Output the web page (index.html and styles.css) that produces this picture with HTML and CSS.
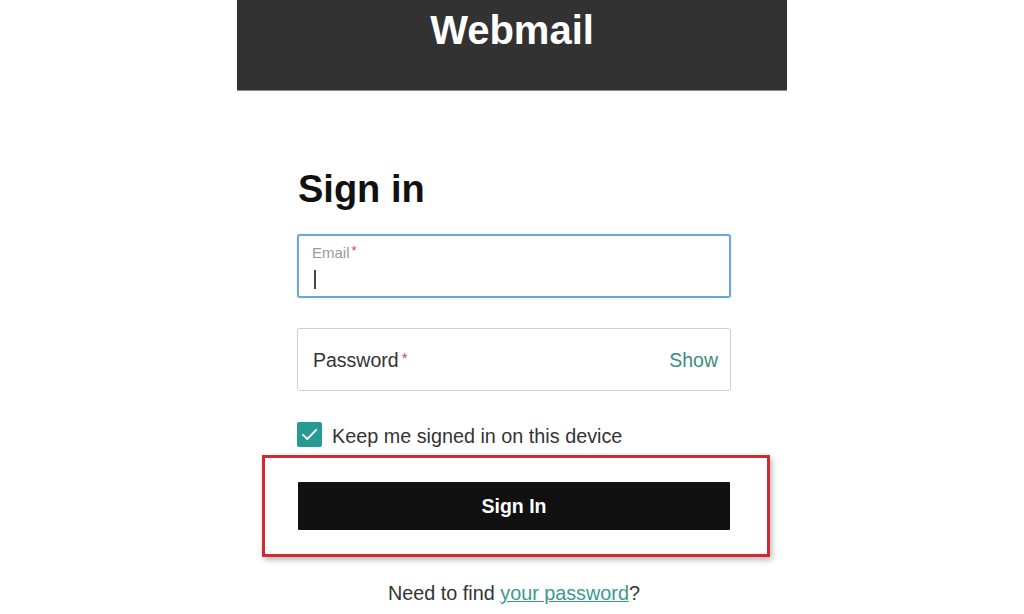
FILE: index.html
```html
<!DOCTYPE html>
<html lang="en">
<head>
<meta charset="utf-8">
<title>Webmail - Sign in</title>
<link rel="stylesheet" href="styles.css">
</head>
<body>
<div class="page">
  <header class="topbar">
    <h1 class="brand">Webmail</h1>
  </header>
  <main class="form">
    <h2 class="title">Sign in</h2>
    <div class="field field-email">
      <div class="field-label">Email<span class="req">*</span></div>
      <div class="caret"></div>
    </div>
    <div class="field field-password">
      <div class="pw-label">Password<span class="req req-big">*</span></div>
      <span class="show">Show</span>
    </div>
    <label class="keep">
      <span class="checkbox">
        <svg width="25" height="25" viewBox="0 0 25 25" aria-hidden="true">
          <path d="M6 12.8 L10.3 17 L19.2 7.8" fill="none" stroke="#ffffff" stroke-width="1.8" stroke-linecap="round" stroke-linejoin="round"/>
        </svg>
      </span>
      <span class="keep-text">Keep me signed in on this device</span>
    </label>
    <div class="highlight">
      <button class="btn" type="button">Sign In</button>
    </div>
    <p class="help">Need to find <a href="#" class="link">your password</a>?</p>
  </main>
</div>
</body>
</html>
```

FILE: styles.css
```css
html, body {
  margin: 0;
  padding: 0;
  background: #ffffff;
}
body {
  font-family: "Liberation Sans", Arial, sans-serif;
  color: #333333;
  overflow: hidden;
}
.page {
  width: 550px;
  margin: 0 auto;
}
.topbar {
  height: 90px;
  background: #323232;
  border-bottom: 1px solid #8c8c8c;
  box-sizing: content-box;
}
.brand {
  margin: 0;
  padding-top: 7px;
  text-align: center;
  font-size: 40px;
  line-height: 46px;
  font-weight: bold;
  color: #ffffff;
}
.form {
  padding-left: 60px;
  width: 434px;
}
.title {
  margin: 77px 0 0 1px;
  font-size: 38px;
  line-height: 42px;
  font-weight: bold;
  color: #111111;
}
.field {
  box-sizing: border-box;
  width: 434px;
  background: #ffffff;
}
.field-email {
  margin-top: 24px;
  height: 64px;
  border: 2px solid #6aa5db;
  border-radius: 3px;
  padding: 6px 13px 0;
  box-shadow: 0 0 2px rgba(106, 165, 219, 0.35);
}
.field-label {
  font-size: 15px;
  line-height: 17px;
  color: #9a9a9a;
}
.req {
  color: #d9444f;
  margin-left: 2px;
  font-size: 13px;
  vertical-align: 3px;
}
.req-big {
  font-size: 15px;
  vertical-align: 4px;
  margin-left: 3px;
}
.caret {
  width: 1.5px;
  height: 19px;
  margin: 9px 0 0 2px;
  background: #444444;
}
.field-password {
  margin-top: 30px;
  height: 63px;
  border: 1px solid #cfcfcf;
  border-radius: 3px;
  padding: 18px 12px 0 15px;
  display: flex;
  justify-content: space-between;
  align-items: flex-start;
}
.pw-label {
  font-size: 19.5px;
  line-height: 22px;
  color: #333333;
}
.show {
  font-size: 19.5px;
  line-height: 22px;
  color: #3e8b80;
  margin-top: 2px;
}
.keep {
  margin-top: 31px;
  height: 25px;
  display: flex;
  align-items: center;
  gap: 10px;
}
.checkbox {
  width: 25px;
  height: 25px;
  flex: none;
  background: #279b93;
  border-radius: 2px;
  display: flex;
}
.keep-text {
  font-size: 19.8px;
  line-height: 22px;
  color: #333333;
  margin-top: 3px;
}
.highlight {
  margin: 8px -39px 0 -35px;
  border: 3px solid #cf2a31;
  padding: 24px 36px 24px 33px;
  box-shadow: 2px 3px 6px rgba(0, 0, 0, 0.28);
}
.btn {
  display: block;
  width: 432px;
  height: 48px;
  border: none;
  border-radius: 1px;
  background: #111111;
  color: #ffffff;
  font-family: "Liberation Sans", Arial, sans-serif;
  font-size: 19.5px;
  font-weight: bold;
  padding: 0;
  cursor: pointer;
}
.help {
  margin: 25px 0 0;
  text-align: center;
  font-size: 19.8px;
  line-height: 22px;
  color: #333333;
}
.link {
  color: #3a9a8f;
  text-decoration: underline;
}
```
